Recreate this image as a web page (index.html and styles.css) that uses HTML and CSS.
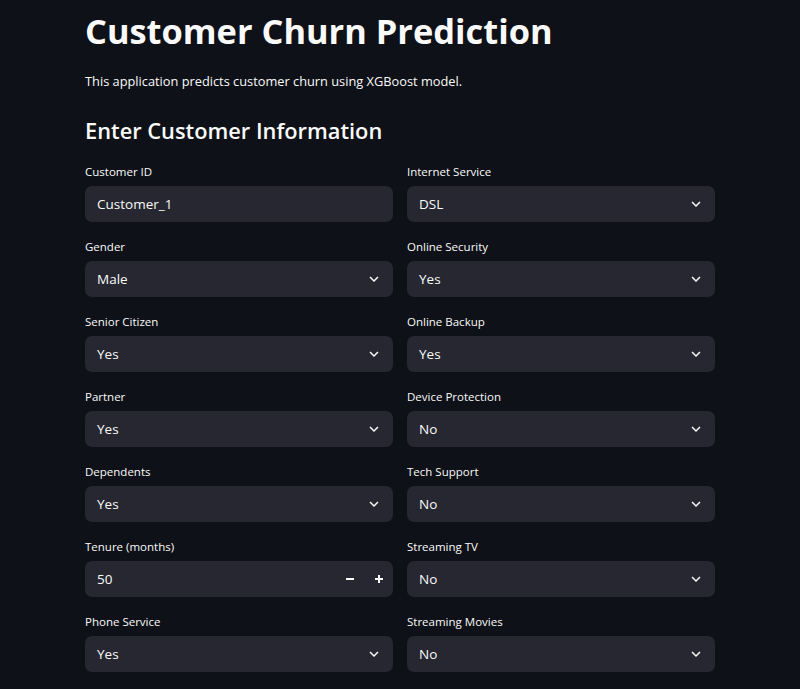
FILE: index.html
```html
<!DOCTYPE html>
<html lang="en">
<head>
  <meta charset="UTF-8">
  <title>Customer Churn Prediction</title>
  <meta name="viewport" content="width=device-width, initial-scale=1.0">
  <link rel="stylesheet" href="styles.css">
</head>
<body>

  <main class="main">
    <h1>Customer Churn Prediction</h1>
    <p class="intro">This application predicts customer churn using XGBoost model.</p>

    <h3>Enter Customer Information</h3>

    <div class="form-grid">
      <!-- left column -->
      <div class="column">
        <div class="field">
          <label>Customer ID</label>
          <div class="input-box"><span class="value">Customer_1</span></div>
        </div>
        <div class="field">
          <label>Gender</label>
          <div class="input-box select"><span class="value">Male</span>
            <svg class="chevron" viewBox="0 0 24 24"><path d="M16.59 8.59L12 13.17 7.41 8.59 6 10l6 6 6-6z"/></svg></div>
        </div>
        <div class="field">
          <label>Senior Citizen</label>
          <div class="input-box select"><span class="value">Yes</span>
            <svg class="chevron" viewBox="0 0 24 24"><path d="M16.59 8.59L12 13.17 7.41 8.59 6 10l6 6 6-6z"/></svg></div>
        </div>
        <div class="field">
          <label>Partner</label>
          <div class="input-box select"><span class="value">Yes</span>
            <svg class="chevron" viewBox="0 0 24 24"><path d="M16.59 8.59L12 13.17 7.41 8.59 6 10l6 6 6-6z"/></svg></div>
        </div>
        <div class="field">
          <label>Dependents</label>
          <div class="input-box select"><span class="value">Yes</span>
            <svg class="chevron" viewBox="0 0 24 24"><path d="M16.59 8.59L12 13.17 7.41 8.59 6 10l6 6 6-6z"/></svg></div>
        </div>
        <div class="field">
          <label>Tenure (months)</label>
          <div class="input-box number"><span class="value">50</span>
            <span class="step-buttons">
              <button class="step" aria-label="Decrement">
                <svg viewBox="0 0 8 8"><path d="M0 4h8"/></svg>
              </button>
              <button class="step" aria-label="Increment">
                <svg viewBox="0 0 8 8"><path d="M0 4h8M4 0v8"/></svg>
              </button>
            </span>
          </div>
        </div>
        <div class="field">
          <label>Phone Service</label>
          <div class="input-box select"><span class="value">Yes</span>
            <svg class="chevron" viewBox="0 0 24 24"><path d="M16.59 8.59L12 13.17 7.41 8.59 6 10l6 6 6-6z"/></svg></div>
        </div>
      </div>

      <!-- right column -->
      <div class="column">
        <div class="field">
          <label>Internet Service</label>
          <div class="input-box select"><span class="value">DSL</span>
            <svg class="chevron" viewBox="0 0 24 24"><path d="M16.59 8.59L12 13.17 7.41 8.59 6 10l6 6 6-6z"/></svg></div>
        </div>
        <div class="field">
          <label>Online Security</label>
          <div class="input-box select"><span class="value">Yes</span>
            <svg class="chevron" viewBox="0 0 24 24"><path d="M16.59 8.59L12 13.17 7.41 8.59 6 10l6 6 6-6z"/></svg></div>
        </div>
        <div class="field">
          <label>Online Backup</label>
          <div class="input-box select"><span class="value">Yes</span>
            <svg class="chevron" viewBox="0 0 24 24"><path d="M16.59 8.59L12 13.17 7.41 8.59 6 10l6 6 6-6z"/></svg></div>
        </div>
        <div class="field">
          <label>Device Protection</label>
          <div class="input-box select"><span class="value">No</span>
            <svg class="chevron" viewBox="0 0 24 24"><path d="M16.59 8.59L12 13.17 7.41 8.59 6 10l6 6 6-6z"/></svg></div>
        </div>
        <div class="field">
          <label>Tech Support</label>
          <div class="input-box select"><span class="value">No</span>
            <svg class="chevron" viewBox="0 0 24 24"><path d="M16.59 8.59L12 13.17 7.41 8.59 6 10l6 6 6-6z"/></svg></div>
        </div>
        <div class="field">
          <label>Streaming TV</label>
          <div class="input-box select"><span class="value">No</span>
            <svg class="chevron" viewBox="0 0 24 24"><path d="M16.59 8.59L12 13.17 7.41 8.59 6 10l6 6 6-6z"/></svg></div>
        </div>
        <div class="field">
          <label>Streaming Movies</label>
          <div class="input-box select"><span class="value">No</span>
            <svg class="chevron" viewBox="0 0 24 24"><path d="M16.59 8.59L12 13.17 7.41 8.59 6 10l6 6 6-6z"/></svg></div>
        </div>
      </div>
    </div>
  </main>

</body>
</html>
```
FILE: styles.css
```css
body {
  font-family: "Open Sans", "Noto Sans", sans-serif;
  background-color: #0e1117;
  color: #fafafa;
  margin: 0;
  padding: 0;
  overflow: hidden;
}
.main {
  max-width: 630px;
  margin: 0 auto;
  padding-top: 10px;
}
h1 {
  font-size: 34.4px;
  font-weight: 700;
  line-height: 1.2;
  margin: 0;
}
.intro {
  font-size: 12.8px;
  line-height: 1.6;
  margin: 20px 0 0;
}
h3 {
  font-size: 21.8px;
  font-weight: 600;
  line-height: 1.2;
  margin: 26px 0 0;
}
.form-grid {
  display: grid;
  grid-template-columns: 1fr 1fr;
  column-gap: 14px;
  margin-top: 18px;
}
.column {
  display: flex;
  flex-direction: column;
  gap: 15px;
}
.field {
  display: flex;
  flex-direction: column;
}
/* field label above each control */
.field label {
  font-size: 11.5px;
  font-weight: 500;
  line-height: 20px;
  margin-bottom: 4px;
}
.input-box {
  display: flex;
  align-items: center;
  height: 36px;
  padding: 1px 0 0 12px;
  background-color: #262730;
  border-radius: 7px;
  box-sizing: border-box;
  font-size: 13.5px;
}
.input-box .value {
  flex: 1;
}
.chevron {
  width: 18px;
  height: 18px;
  margin-right: 10px;
  fill: #fafafa;
}
.step-buttons {
  display: flex;
  height: 100%;
}
.step {
  width: 29px;
  height: 100%;
  display: flex;
  align-items: center;
  justify-content: center;
  background: none;
  border: none;
  padding: 0;
  cursor: pointer;
}
.step svg {
  width: 8px;
  height: 8px;
  stroke: #fafafa;
  stroke-width: 2;
}
```
